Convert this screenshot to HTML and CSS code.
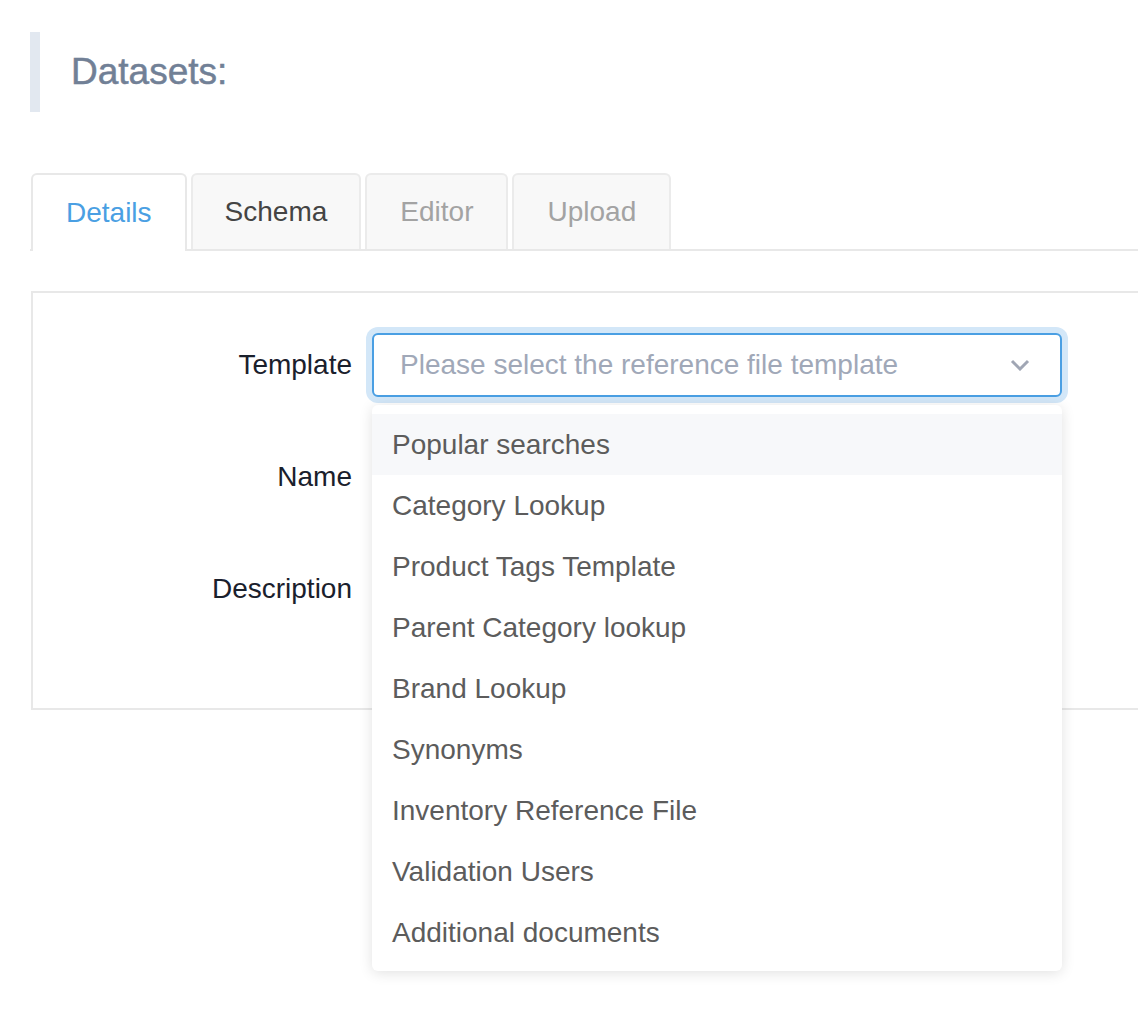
FILE: index.html
```html
<!DOCTYPE html>
<html lang="en">
<head>
    <meta charset="UTF-8">
    <meta name="viewport" content="width=device-width, initial-scale=1.0">
    <title>Datasets</title>
    <link rel="stylesheet" href="styles.css">
</head>
<body>
    <div class="page">
        <div class="page-title">
            <h1>Datasets:</h1>
        </div>

        <div class="tabs">
            <div class="tab active">Details</div>
            <div class="tab">Schema</div>
            <div class="tab disabled">Editor</div>
            <div class="tab disabled">Upload</div>
        </div>

        <div class="panel">
            <div class="form-row">
                <label for="template">Template</label>
                <div class="select-wrap">
                    <div class="select focused" id="template">
                        <span class="placeholder">Please select the reference file template</span>
                        <svg class="chevron" width="20" height="12" viewBox="0 0 20 12">
                            <polyline points="2,2 10,10 18,2" fill="none" stroke="#a0a6b4" stroke-width="3"/>
                        </svg>
                    </div>
                    <ul class="dropdown">
                        <li class="hover">Popular searches</li>
                        <li>Category Lookup</li>
                        <li>Product Tags Template</li>
                        <li>Parent Category lookup</li>
                        <li>Brand Lookup</li>
                        <li>Synonyms</li>
                        <li>Inventory Reference File</li>
                        <li>Validation Users</li>
                        <li>Additional documents</li>
                    </ul>
                </div>
            </div>

            <div class="form-row">
                <label for="name">Name</label>
                <input type="text" id="name" class="text-input">
            </div>

            <div class="form-row">
                <label for="description">Description</label>
                <input type="text" id="description" class="text-input">
            </div>
        </div>
    </div>
</body>
</html>
```

FILE: styles.css
```css
body {
    margin: 0;
    background-color: #fff;
    font-family: "Liberation Sans", Arial, sans-serif;
}
.page {
    min-height: 100vh;
    box-sizing: border-box;
    padding: 32px 0 40px 30px;
}
.page-title {
    height: 80px;
    border-left: 10px solid #e2e8f0;
    padding-left: 31px;
    display: flex;
    align-items: center;
}
.page-title h1 {
    margin: 0;
    font-size: 37px;
    font-weight: normal;
    color: #718096;
    -webkit-text-stroke: 0.5px #718096;
}
.tabs {
    margin-top: 61px;
    display: flex;
    gap: 4px;
    border-bottom: 2px solid #e8e8e8;
    padding-left: 1px;
}
.tab {
    height: 74px;
    padding: 0 32px;
    display: flex;
    align-items: center;
    font-size: 28px;
    color: #444;
    background-color: #f8f8f8;
    border: 2px solid #ebebeb;
    border-bottom: none;
    border-radius: 6px 6px 0 0;
    margin-bottom: -2px;
}
.tab.active {
    color: #4a9fe3;
    background-color: #fff;
    border-color: #e8e8e8;
    height: 76px;
    padding: 0 33px;
}
.tab.disabled {
    color: #a3a3a3;
    padding: 0 33px;
}
.panel {
    margin-top: 40px;
    margin-left: 1px;
    border: 2px solid #e8e8e8;
    border-right: none;
    padding: 40px 0 87px;
    display: flex;
    flex-direction: column;
    gap: 48px;
}
.form-row {
    display: flex;
    align-items: center;
    gap: 20px;
}
.form-row label {
    width: 319px;
    flex-shrink: 0;
    text-align: right;
    font-size: 28px;
    color: #1a202c;
}
.select-wrap {
    position: relative;
    width: 690px;
}
.select {
    height: 64px;
    box-sizing: border-box;
    border: 2px solid #4a9fe3;
    border-radius: 6px;
    padding: 0 30px 0 26px;
    display: flex;
    align-items: center;
    justify-content: space-between;
    background-color: #fff;
}
.select.focused {
    box-shadow: 0 0 0 6px #d3e7f8;
}
.placeholder {
    font-size: 28px;
    color: #a0a8b8;
}
.text-input {
    width: 690px;
    height: 64px;
    box-sizing: border-box;
    border: 2px solid #e2e8f0;
    border-radius: 6px;
}
.dropdown {
    position: absolute;
    top: 72px;
    left: 0;
    right: 0;
    margin: 0;
    padding: 9px 0 8px;
    list-style: none;
    background-color: #fff;
    border-radius: 6px;
    box-shadow: 0 2px 14px rgba(0, 0, 0, 0.12);
    z-index: 10;
}
.dropdown li {
    height: 61px;
    padding: 0 20px;
    display: flex;
    align-items: center;
    font-size: 28px;
    color: #5c5c5c;
}
.dropdown li.hover {
    background-color: #f7f8fa;
}
```
